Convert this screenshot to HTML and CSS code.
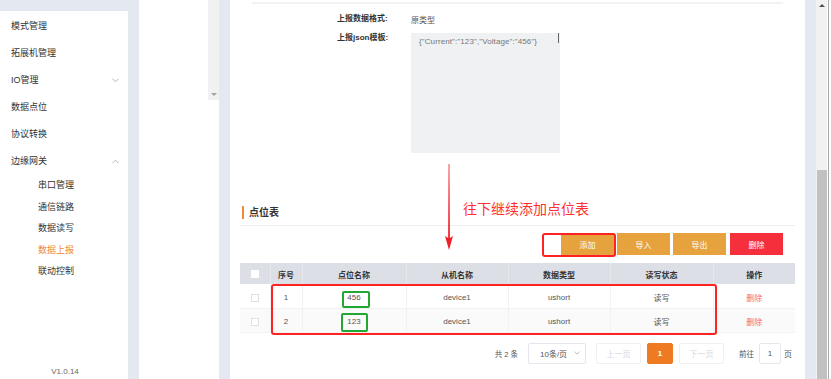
FILE: index.html
```html
<!DOCTYPE html>
<html lang="zh-CN">
<head>
<meta charset="utf-8">
<link rel="stylesheet" href="styles.css">
</head>
<body>
<div class="app">
  <aside class="sidebar">
    <div class="menu-item">模式管理</div>
    <div class="menu-item">拓展机管理</div>
    <div class="menu-item">IO管理<svg class="chev" viewBox="0 0 8 5" width="7" height="5"><path d="M0.5 0.5 L4 4 L7.5 0.5" fill="none" stroke="#999" stroke-width="0.8"/></svg></div>
    <div class="menu-item">数据点位</div>
    <div class="menu-item">协议转换</div>
    <div class="menu-item">边缘网关<svg class="chev" viewBox="0 0 8 5" width="7" height="5"><path d="M0.5 4.5 L4 1 L7.5 4.5" fill="none" stroke="#999" stroke-width="0.8"/></svg></div>
    <div class="sub-item">串口管理</div>
    <div class="sub-item">通信链路</div>
    <div class="sub-item">数据读写</div>
    <div class="sub-item active">数据上报</div>
    <div class="sub-item">联动控制</div>
    <div class="version">V1.0.14</div>
  </aside>

  <section class="panel">
    <div class="panel-scroll"><span class="tri-down"></span></div>
  </section>

  <main class="content">
    <div class="top-line"></div>
    <div class="form">
      <div class="form-row">
        <div class="label">上报数据格式:</div>
        <div class="value">原类型</div>
      </div>
      <div class="form-row tall">
        <div class="label">上报json模板:</div>
        <div class="textarea">{"Current":"123","Voltage":"456"}</div>
      </div>
    </div>

    <div class="section-title"><span class="title-text">点位表</span></div>

    <div class="toolbar">
      <span class="btn-spacer"></span>
      <button class="btn warn">添加</button>
      <button class="btn warn">导入</button>
      <button class="btn warn">导出</button>
      <button class="btn danger">删除</button>
    </div>

    <table class="grid">
      <colgroup>
        <col class="c0"><col class="c1"><col class="c2"><col class="c3"><col class="c4"><col class="c5"><col class="c6">
      </colgroup>
      <thead>
        <tr><th><span class="chk head"></span></th><th>序号</th><th>点位名称</th><th>从机名称</th><th>数据类型</th><th>读写状态</th><th>操作</th></tr>
      </thead>
      <tbody>
        <tr><td><span class="chk"></span></td><td>1</td><td>456</td><td>device1</td><td>ushort</td><td>读写</td><td class="del">删除</td></tr>
        <tr class="stripe"><td><span class="chk"></span></td><td>2</td><td>123</td><td>device1</td><td>ushort</td><td>读写</td><td class="del">删除</td></tr>
      </tbody>
    </table>

    <div class="pager">
      <span class="total">共 2 条</span>
      <span class="select">10条/页<svg class="sel-chev" viewBox="0 0 8 5" width="6" height="4"><path d="M0.5 0.5 L4 4 L7.5 0.5" fill="none" stroke="#999" stroke-width="0.9"/></svg></span>
      <span class="pbtn prev">上一页</span>
      <span class="pbtn cur">1</span>
      <span class="pbtn next">下一页</span>
      <span class="goto">前往</span>
      <span class="pinput">1</span>
      <span class="page-word">页</span>
    </div>

    <!-- annotations -->
    <svg class="arrow" viewBox="0 0 12 86" width="12" height="86"><polygon points="5.6,0 6.4,0 6.9,74 10,72 6,86 2,72 5.1,74" fill="#f0202a"/></svg>
    <div class="note">往下继续添加点位表</div>
    <div class="mark mark-add"></div>
    <div class="mark mark-rows"></div>
    <div class="gmark g1"></div>
    <div class="gmark g2"></div>
  </main>

  <div class="scrollbar">
    <div class="sb-track"><span class="tri-up"></span></div>
    <div class="sb-thumb"></div>
  </div>
</div>
</body>
</html>
```

FILE: styles.css
```css
* { box-sizing: border-box; }
html, body { margin: 0; padding: 0; }
body {
  width: 831px;
  height: 379px;
  overflow: hidden;
  background: #e4e8f0;
  font-family: "Liberation Sans", "Noto Sans CJK SC", sans-serif;
  color: #333;
}
.app {
  display: flex;
  gap: 11px;
  height: 379px;
}

/* sidebar */
.sidebar {
  width: 128px;
  flex: none;
  margin-top: 11px;
  padding-top: 2px;
  background: #fff;
  display: flex;
  flex-direction: column;
}
.menu-item {
  height: 27px;
  line-height: 27px;
  padding-left: 11px;
  padding-right: 9px;
  font-size: 9px;
  color: #333;
  display: flex;
  align-items: center;
  justify-content: space-between;
}
.chev { display: block; }
.sub-item {
  height: 21.5px;
  line-height: 21.5px;
  padding-left: 38px;
  font-size: 9px;
  color: #333;
}
.sub-item:first-of-type { margin-top: 1px; }
.sub-item.active { color: #f0883a; }
.version {
  margin-top: auto;
  margin-bottom: 3px;
  text-align: center;
  font-size: 8px;
  color: #666;
  padding-left: 2px;
}

/* middle panel */
.panel {
  width: 80px;
  flex: none;
  background: #fff;
  display: flex;
  justify-content: flex-end;
  align-items: flex-start;
}
.panel-scroll {
  width: 11px;
  height: 100px;
  background: #f1f1f1;
  display: flex;
  justify-content: center;
  align-items: flex-end;
  padding-bottom: 4px;
}
.tri-down {
  width: 0; height: 0;
  border-left: 3px solid transparent;
  border-right: 3px solid transparent;
  border-top: 3px solid #a3a3a3;
}

/* main content */
.content {
  position: relative;
  width: 575px;
  flex: none;
  background: #fff;
  padding: 0 10px;
}
.top-line {
  height: 4px;
  margin: 0 12px;
  border-bottom: 2px solid #f1f2f4;
}
.form {
  padding-left: 97px;
  padding-top: 9px;
}
.form-row {
  display: flex;
  height: 12px;
  align-items: center;
  font-size: 8px;
}
.form-row.tall {
  height: auto;
  align-items: flex-start;
  margin-top: 8px;
}
.label {
  width: 74px;
  font-weight: bold;
  color: #333;
  line-height: 10px;
}
.form-row.tall .label { padding-top: 0; }
.value { color: #555; }
.textarea {
  position: relative;
  width: 149px;
  height: 120px;
  background: #f0f1f3;
  color: #777;
  padding: 4px 8px;
  line-height: 10px;
  font-size: 8px;
  letter-spacing: 0.1px;
}
.textarea::after {
  content: "";
  position: absolute;
  right: 1px;
  top: 0;
  width: 1px;
  height: 10px;
  background: #666;
}

.section-title {
  margin-top: 47px;
  height: 26px;
  border-bottom: 1px solid #eceef1;
  display: flex;
  align-items: center;
  padding-left: 2px;
}
.title-text {
  border-left: 2px solid #f08a3c;
  padding-left: 5px;
  font-size: 10px;
  font-weight: bold;
  line-height: 13px;
  color: #333;
}

.toolbar {
  margin-top: 7px;
  height: 22px;
  display: flex;
  justify-content: flex-end;
  padding-right: 12px;
  gap: 3px;
}
.btn-spacer { width: 18px; margin-right: -3px; background: #fff; }
.btn {
  width: 53px;
  height: 22px;
  border: none;
  padding: 0;
  font-family: inherit;
  font-size: 8px;
  color: #fff;
}
.btn.warn { background: #e6a33d; }
.btn.danger { background: #f52f3c; margin-left: 1px; }

.grid {
  margin-top: 8px;
  width: 555px;
  border-collapse: collapse;
  table-layout: fixed;
  font-size: 8px;
  color: #555;
}
.c0 { width: 30px; } .c1 { width: 32px; } .c2 { width: 104px; } .c3 { width: 102px; }
.c4 { width: 102px; } .c5 { width: 103px; } .c6 { width: 82px; }
.grid th {
  height: 21px;
  background: #dcdfe6;
  font-weight: bold;
  color: #333;
  border-left: 1px solid #e6e8ee;
  padding: 1px 0 0;
}
.grid th:first-child { border-left: none; }
.grid td {
  height: 24px;
  text-align: center;
  border-left: 1px solid #f2f2f2;
  border-bottom: 1px solid #f2f2f2;
  padding: 3px 0 0;
}
.grid td:first-child { border-left: none; }
.grid tr.stripe td { background: #fafafa; }
.grid td.del { color: #f56c6c; }
.chk {
  display: inline-block;
  width: 8px;
  height: 8px;
  border: 1px solid #e0e0e0;
  background: #fff;
  vertical-align: middle;
}
.chk.head { border-color: #fff; }

.pager {
  margin-top: 10px;
  height: 21px;
  display: flex;
  justify-content: flex-end;
  align-items: center;
  padding-right: 3px;
  font-size: 8px;
  color: #555;
}
.total { margin-right: 10px; font-size: 7.5px; }
.select {
  width: 58px;
  height: 21px;
  border: 1px solid #e4e7ed;
  border-radius: 2px;
  display: flex;
  align-items: center;
  justify-content: space-between;
  padding: 0 5px 0 11px;
  margin-right: 10px;
  color: #555;
}
.pbtn {
  width: 45px;
  height: 21px;
  border: 1px solid #eef0f3;
  border-radius: 2px;
  display: flex;
  align-items: center;
  justify-content: center;
  color: #d4d7dd;
}
.pbtn.cur {
  width: 26px;
  margin: 0 6px;
  background: #ee7a22;
  border-color: #ee7a22;
  color: #fff;
  font-weight: bold;
}
.goto { margin-left: 15px; margin-right: 5px; font-size: 7.5px; }
.pinput {
  width: 22px;
  height: 21px;
  border: 1px solid #e4e7ed;
  border-radius: 2px;
  display: flex;
  align-items: center;
  justify-content: center;
  margin-right: 3px;
}

/* annotations */
.arrow { position: absolute; left: 213px; top: 164px; }
.note {
  position: absolute;
  left: 233px;
  top: 198px;
  font-family: "Noto Sans CJK SC", sans-serif;
  font-size: 14px;
  line-height: 20px;
  color: #ff3030;
}
.mark {
  position: absolute;
  border: 2px solid #f22;
  border-radius: 3px;
}
.mark-add { left: 312px; top: 233px; width: 74px; height: 24px; }
.mark-rows { left: 41px; top: 284px; width: 446px; height: 51px; }
.gmark {
  position: absolute;
  border: 2px solid #22a832;
  border-radius: 2px;
}
.g1 { left: 112px; top: 291px; width: 28px; height: 17px; }
.g2 { left: 111px; top: 313px; width: 27px; height: 19px; }

/* right scrollbar */
.scrollbar {
  width: 15px;
  flex: none;
  display: flex;
  flex-direction: column;
  background: #fff;
  border-left: 1px solid #f1f1f1;
  padding-right: 4px;
  position: relative;
}
.scrollbar::after {
  content: "";
  position: absolute;
  right: 2px;
  top: 0;
  bottom: 0;
  width: 1px;
  background: #aaa;
}
.sb-track {
  height: 170px;
  background: #f1f1f1;
  display: flex;
  justify-content: center;
  padding-top: 4px;
}
.tri-up {
  width: 0; height: 0;
  border-left: 3px solid transparent;
  border-right: 3px solid transparent;
  border-bottom: 3px solid #505050;
}
.sb-thumb { flex: 1; background: #c1c1c1; }
```
